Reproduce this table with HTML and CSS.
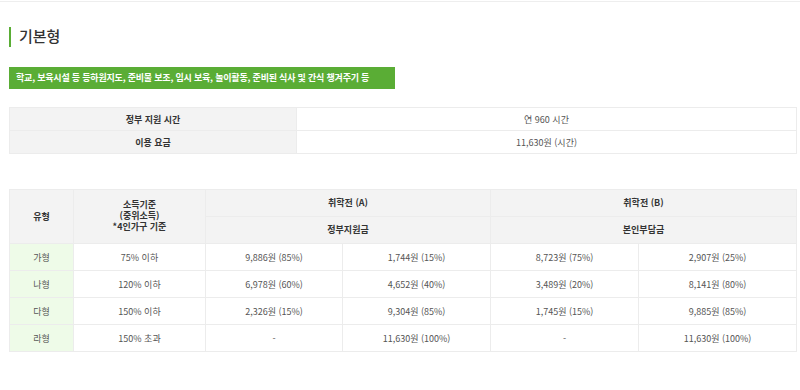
FILE: index.html
```html
<!DOCTYPE html>
<html lang="ko">
<head>
<meta charset="utf-8">
<link rel="stylesheet" href="styles.css">
</head>
<body>
<div class="page">
  <h2 class="title">기본형</h2>
  <div class="notice">학교, 보육시설 등 등하원지도, 준비물 보조, 임시 보육, 놀이활동, 준비된 식사 및 간식 챙겨주기 등</div>
  <table class="info">
    <colgroup><col class="c-label"><col></colgroup>
    <tr><th>정부 지원 시간</th><td>연 960 시간</td></tr>
    <tr><th>이용 요금</th><td>11,630원 (시간)</td></tr>
  </table>
  <table class="fee">
    <colgroup>
      <col class="w1"><col class="w2"><col class="w3"><col class="w4"><col class="w5"><col>
    </colgroup>
    <thead>
      <tr>
        <th rowspan="2">유형</th>
        <th rowspan="2" class="multi">소득기준<br>(중위소득)<br>*4인가구 기준</th>
        <th colspan="2">취학전 (A)</th>
        <th colspan="2">취학전 (B)</th>
      </tr>
      <tr>
        <th colspan="2">정부지원금</th>
        <th colspan="2">본인부담금</th>
      </tr>
    </thead>
    <tbody>
      <tr><td class="type">가형</td><td>75% 이하</td><td>9,886원 (85%)</td><td>1,744원 (15%)</td><td>8,723원 (75%)</td><td>2,907원 (25%)</td></tr>
      <tr><td class="type">나형</td><td>120% 이하</td><td>6,978원 (60%)</td><td>4,652원 (40%)</td><td>3,489원 (20%)</td><td>8,141원 (80%)</td></tr>
      <tr><td class="type">다형</td><td>150% 이하</td><td>2,326원 (15%)</td><td>9,304원 (85%)</td><td>1,745원 (15%)</td><td>9,885원 (85%)</td></tr>
      <tr><td class="type">라형</td><td>150% 초과</td><td>-</td><td>11,630원 (100%)</td><td>-</td><td>11,630원 (100%)</td></tr>
    </tbody>
  </table>
</div>
</body>
</html>
```
FILE: styles.css
```css
html, body {
  margin: 0;
  padding: 0;
  background: #fff;
}
body {
  font-family: "Noto Sans CJK KR", "Noto Sans", sans-serif;
  color: #555;
  border-top: 1px solid #eee;
  margin-top: 1px;
}
.page {
  padding: 25px 3px 0 9px;
}
.title {
  margin: 0;
  border-left: 2px solid #5aad35;
  padding-left: 8px;
  font-size: 15px;
  font-weight: 500;
  color: #333;
  line-height: 18px;
  height: 20px;
}
.notice {
  margin-top: 20px;
  width: 386px;
  height: 22px;
  box-sizing: border-box;
  background: #5aad35;
  color: #fff;
  font-size: 9px;
  font-weight: 700;
  line-height: 22px;
  padding-left: 7px;
  letter-spacing: -0.2px;
}
table {
  border-collapse: collapse;
  width: 788px;
  font-size: 9px;
  table-layout: fixed;
}
.info {
  margin-top: 18px;
}
.info .c-label { width: 287px; }
.info th, .info td {
  border: 1px solid #ececec;
  height: 22px;
  padding: 0;
  text-align: center;
}
.info th {
  background: #f3f3f3;
  color: #333;
  font-weight: 700;
}
.info td { color: #555; }
.fee {
  margin-top: 35px;
}
.fee .w1 { width: 64px; }
.fee .w2 { width: 132px; }
.fee .w3 { width: 137px; }
.fee .w4 { width: 148px; }
.fee .w5 { width: 148px; }
.fee th, .fee td {
  border: 1px solid #ececec;
  padding: 0;
  text-align: center;
  height: 26px;
}
.fee th {
  background: #f3f3f3;
  color: #333;
  font-weight: 700;
  line-height: 12px;
}
.fee th.multi {
  line-height: 11px;
  padding-bottom: 3px;
}
.fee td { color: #555; }
.fee td.type { background: #eefbe8; }
```
